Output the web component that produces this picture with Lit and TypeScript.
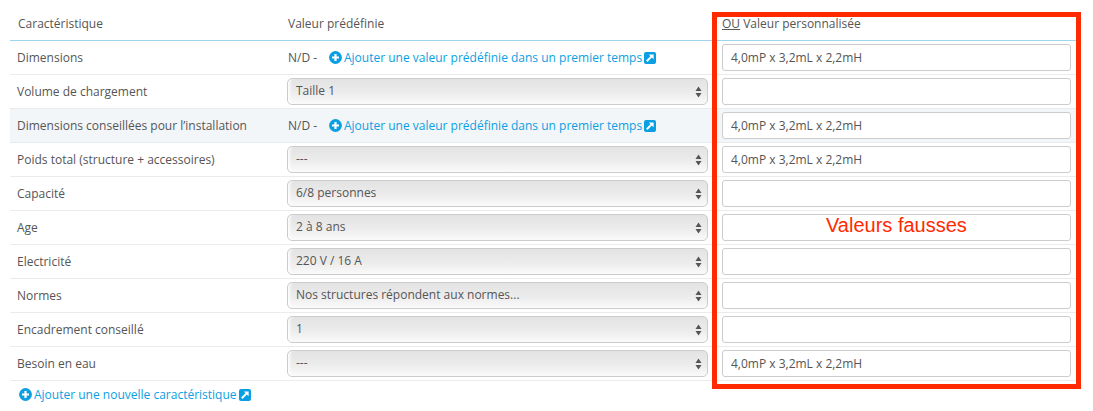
import { LitElement, html, css, svg } from "lit";
import { customElement } from "lit/decorators.js";

type Row = { label: string; sel?: string; val: string; tint?: boolean };

const rows: Row[] = [
  { label: "Dimensions", val: "4,0mP x 3,2mL x 2,2mH" },
  { label: "Volume de chargement", sel: "Taille 1", val: "" },
  { label: "Dimensions conseillées pour l’installation", val: "4,0mP x 3,2mL x 2,2mH", tint: true },
  { label: "Poids total (structure + accessoires)", sel: "---", val: "4,0mP x 3,2mL x 2,2mH" },
  { label: "Capacité", sel: "6/8 personnes", val: "" },
  { label: "Age", sel: "2 à 8 ans", val: "" },
  { label: "Electricité", sel: "220 V / 16 A", val: "" },
  { label: "Normes", sel: "Nos structures répondent aux normes...", val: "" },
  { label: "Encadrement conseillé", sel: "1", val: "" },
  { label: "Besoin en eau", sel: "---", val: "4,0mP x 3,2mL x 2,2mH" },
];

const plus = svg`<svg class="ic" width="13" height="13" viewBox="0 0 13 13"><circle cx="6.5" cy="6.5" r="6.4" fill="#0a9fe3"/><path d="M6.5 3v7M3 6.5h7" stroke="#fff" stroke-width="2.2"/></svg>`;
const ext = svg`<svg class="ic" width="12" height="12" viewBox="0 0 12 12"><rect width="12" height="12" rx="2" fill="#0a9fe3"/><path d="M2.8 9.2l4.8-4.8" stroke="#fff" stroke-width="2"/><path d="M4.8 2.4h4.8v4.8z" fill="#fff"/></svg>`;
const arrows = svg`<svg class="arrows" width="7" height="12" viewBox="0 0 7 12"><path d="M3.5 0.5L6.5 5H.5z" fill="#555"/><path d="M3.5 11.5L.5 7h6z" fill="#555"/></svg>`;

@customElement("app-root")
export class AppRoot extends LitElement {
  static styles = css`
    :host {
      display: block;
      font-family: "Open Sans", sans-serif;
      font-size: 12px;
      color: #555;
      position: relative;
      height: 411px;
      background: #fff;
      overflow: hidden;
    }
    .table { margin-left: 10px; width: 1068px; }
    .row {
      display: grid;
      grid-template-columns: 277px 421px 14px 349px;
      height: 33px;
      border-bottom: 1px solid #e8ecef;
      align-items: center;
    }
    .row.tint { background: #f3f6f9; }
    .row.head {
      box-sizing: border-box;
      height: 41px;
      padding-top: 6px;
      border-bottom: 1px solid #9fd3ee;
    }
    .lab { padding-left: 7px; white-space: nowrap; }
    .head .lab { padding-left: 8px; }
    .head .v { padding-left: 1px; }
    .v { white-space: nowrap; display: flex; align-items: center; }
    .link { color: #0a9fe3; display: inline-flex; align-items: center; gap: 2px; }
    .ic { flex: none; }
    .nd { margin-left: 1px; width: 41px; }
    .gap { grid-column: 3; }
    .sel {
      position: relative;
      width: 100%;
    }
    select {
      appearance: none;
      -webkit-appearance: none;
      display: block;
      width: 100%;
      height: 27px;
      box-sizing: border-box;
      padding: 0 24px 2px 8px;
      border: 1px solid #ccc;
      border-radius: 5px;
      font: inherit;
      color: #555;
      background: linear-gradient(#e3e3e3, #ececec 55%, #fafafa);
      box-shadow: inset 4px 0 3px -2px rgba(255,255,255,.9);
    }
    .arrows { position: absolute; right: 6px; top: 8px; pointer-events: none; }
    input {
      display: block;
      width: 100%;
      height: 27px;
      box-sizing: border-box;
      padding: 0 8px;
      border: 1px solid #ccc;
      border-radius: 3px;
      font: inherit;
      color: #555;
      background: #fff;
      outline: none;
    }
    .foot { margin: 5px 0 0 19px; display: block; }
    .box {
      position: absolute;
      left: 712px;
      top: 12px;
      width: 369px;
      height: 377px;
      box-sizing: border-box;
      border: 5px solid #ff2a00;
      pointer-events: none;
    }
    .note {
      position: absolute;
      left: 826px;
      top: 214px;
      font-family: "Liberation Sans", Arial, sans-serif;
      font-size: 20px;
      line-height: 23px;
      color: #ff2a00;
    }
  `;

  private addLink() {
    return html`<span class="link">${plus}<span>Ajouter une valeur prédéfinie dans un premier temps</span>${ext}</span>`;
  }

  render() {
    return html`
      <div class="table">
        <div class="row head">
          <div class="lab">Caractéristique</div>
          <div class="v">Valeur prédéfinie</div>
          <div class="gap"></div>
          <div><u>OU</u> Valeur personnalisée</div>
        </div>
        ${rows.map(
          (r) => html`
            <div class="row ${r.tint ? "tint" : ""}">
              <div class="lab">${r.label}</div>
              <div class="v">
                ${r.sel
                  ? html`<div class="sel"><select><option>${r.sel}</option></select>${arrows}</div>`
                  : html`<span class="nd">N/D -</span>${this.addLink()}`}
              </div>
              <div class="gap"></div>
              <input type="text" .value=${r.val} />
            </div>
          `
        )}
      </div>
      <div class="foot">
        <span class="link">${plus}<span>Ajouter une nouvelle caractéristique</span>${ext}</span>
      </div>
      <div class="box"></div>
      <div class="note">Valeurs fausses</div>
    `;
  }
}
